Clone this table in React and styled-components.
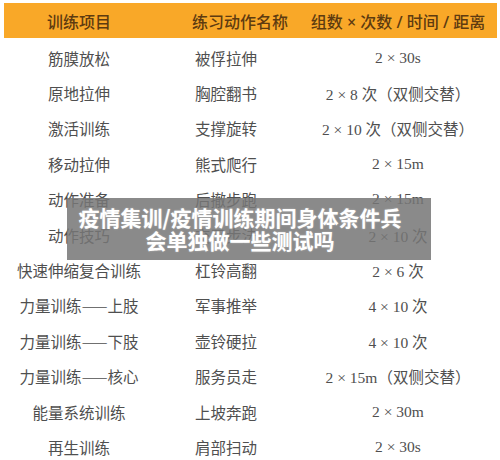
import { createGlobalStyle, styled } from 'styled-components'

const GlobalStyle = createGlobalStyle`
  body {
    margin: 0;
    background: #ffffff;
  }
`;

const Page = styled.div`
  position: relative;
  width: 500px;
  height: 460px;
  padding: 3px 3px 0 4px;
  box-sizing: border-box;
  overflow: hidden;
  background: #fff;
`;

const HeaderRow = styled.div`
  display: grid;
  grid-template-columns: 150px 172px 144px 1fr;
  height: 35px;
  margin-bottom: 2px;
  background: #f9a828;
`;

const HeadCell = styled.div`
  color: #5e3b10;
  font-family: "Noto Sans", "Noto Sans CJK SC", sans-serif;
  font-weight: 500;
  font-size: 16px;
  display: flex;
  align-items: center;
  justify-content: center;
  white-space: nowrap;
`;

const Row = styled.div`
  display: grid;
  grid-template-columns: 150px 172px 144px 1fr;
  height: 35.4px;
`;

const Cell = styled.div`
  display: flex;
  align-items: center;
  justify-content: ${(p) => (p.$left ? 'flex-start' : 'center')};
  padding-left: ${(p) => (p.$left ? '41px' : '0')};
  color: #4f4f4f;
  font-family: "Liberation Serif", "Noto Sans CJK SC", serif;
  font-size: 15.5px;
  white-space: nowrap;
`;

// full-width dashes, as in the printed table
const Dash = styled.span`
  font-family: "Noto Sans CJK SC", sans-serif;
  font-weight: 300;
`;

const Banner = styled.div`
  position: absolute;
  left: 67px;
  top: 198px;
  width: 364px;
  height: 62px;
  padding-right: 18px;
  box-sizing: border-box;
  background: rgba(118, 118, 118, 0.85);
  display: flex;
  flex-direction: column;
  align-items: center;
  justify-content: center;
  color: #fff;
  font-family: "Noto Sans CJK SC", sans-serif;
  font-weight: 700;
  font-size: 21px;
  line-height: 23px;
  text-shadow: 0 0 2px rgba(255, 255, 255, 0.4);
`;

const rows = [
  ['筋膜放松', '被俘拉伸', '2 × 30s'],
  ['原地拉伸', '胸腔翻书', '2 × 8 次（双侧交替）'],
  ['激活训练', '支撑旋转', '2 × 10 次（双侧交替）'],
  ['移动拉伸', '熊式爬行', '2 × 15m'],
  ['动作准备', '后撤步跑', '2 × 15m'],
  ['动作技巧', '交叉步法', '2 × 10 次'],
  ['快速伸缩复合训练', '杠铃高翻', '2 × 6 次'],
  ['力量训练——上肢', '军事推举', '4 × 10 次'],
  ['力量训练——下肢', '壶铃硬拉', '4 × 10 次'],
  ['力量训练——核心', '服务员走', '2 × 15m（双侧交替）'],
  ['能量系统训练', '上坡奔跑', '2 × 30m'],
  ['再生训练', '肩部扫动', '2 × 30s'],
]

function Item({ text }) {
  const parts = text.split('——')
  if (parts.length < 2) return text
  return (
    <>
      {parts[0]}
      <Dash>——</Dash>
      {parts[1]}
    </>
  )
}

export default function App() {
  return (
    <Page>
      <GlobalStyle />
      <HeaderRow>
        <HeadCell>训练项目</HeadCell>
        <HeadCell>练习动作名称</HeadCell>
        <HeadCell>组数 × 次数 / 时间 / 距离</HeadCell>
      </HeaderRow>
      {rows.map((r) => (
        <Row key={r[0]}>
          <Cell><Item text={r[0]} /></Cell>
          <Cell $left>{r[1]}</Cell>
          <Cell>{r[2]}</Cell>
        </Row>
      ))}
      <Banner>
        <div>疫情集训/疫情训练期间身体条件兵</div>
        <div>会单独做一些测试吗</div>
      </Banner>
    </Page>
  )
}
